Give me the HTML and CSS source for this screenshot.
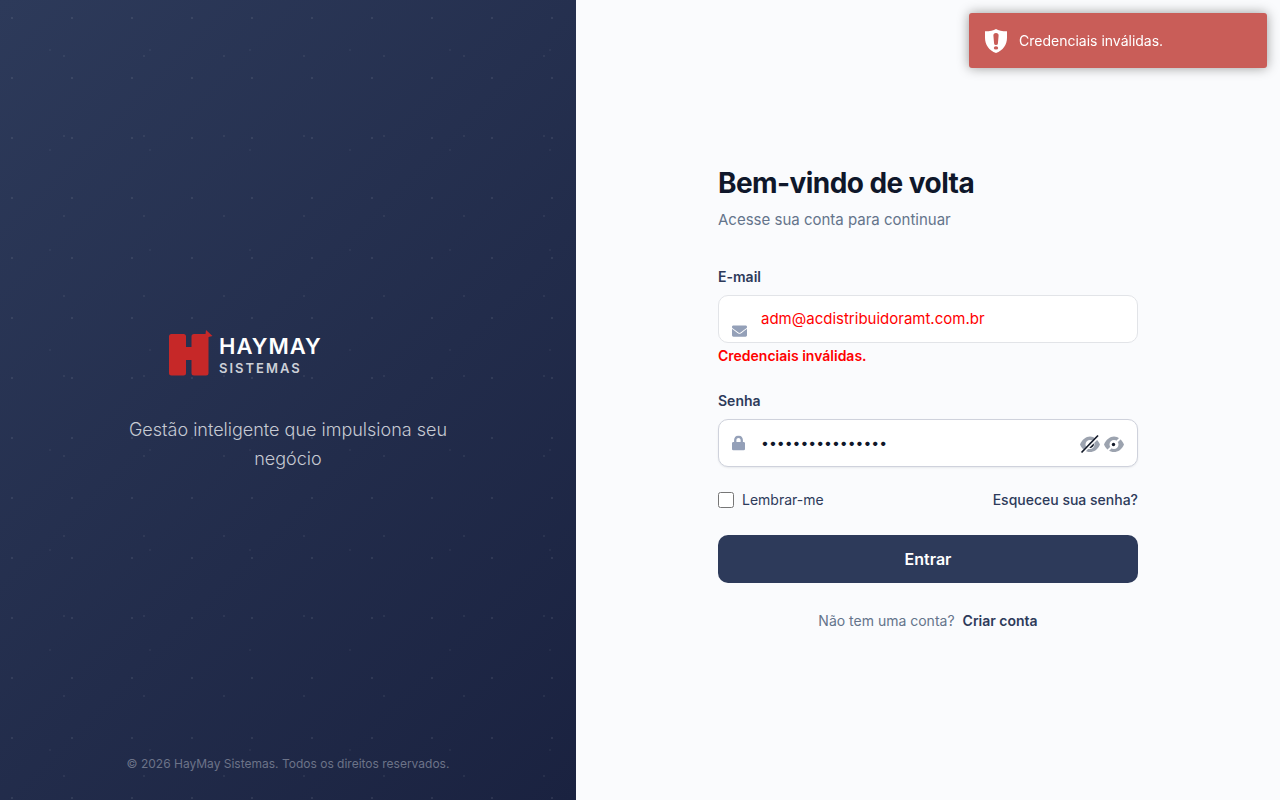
FILE: index.html
```html
<!DOCTYPE html>
<html lang="pt-BR">
<head>
<meta charset="utf-8">
<meta name="viewport" content="width=device-width, initial-scale=1">
<title>HayMay Sistemas</title>
<link rel="stylesheet" href="styles.css">
</head>
<body>
<div class="login">
  <aside class="brand">
    <div class="brand-main">
      <div class="logo">
        <svg class="logo-mark" viewBox="0 0 44 46" aria-hidden="true">
          <path fill="#c62828" d="M3 4H15.500Q18 4 18 6.500V17H23.500V6.500Q23.500 4 26 4H37.500L38 0 44.500 6 40.500 7V43Q40.500 45.500 38 45.500H26Q23.500 45.500 23.500 43V30H18V43Q18 45.500 15.500 45.500H3.500Q1 45.500 1 43V6.500Q1 4 3.500 4Z"/>
        </svg>
        <div class="logo-text"><span class="logo-name">HAYMAY</span><span class="logo-sub">SISTEMAS</span></div>
      </div>
      <p class="tagline">Gestão inteligente que impulsiona seu negócio</p>
    </div>
    <p class="copyright">© 2026 HayMay Sistemas. Todos os direitos reservados.</p>
  </aside>
  <main class="panel">
    <form class="form">
      <h1 class="title">Bem-vindo de volta</h1>
      <p class="subtitle">Acesse sua conta para continuar</p>
      <div class="field">
        <label class="label" for="email">E-mail</label>
        <div class="control">
          <input class="input input-error" id="email" type="email" value="adm@acdistribuidoramt.com.br">
          <svg class="icon" width="15" height="15" viewBox="0 0 512 512" aria-hidden="true"><path fill="currentColor" d="M502.300 190.800c3.900-3.100 9.700-.2 9.700 4.700V400c0 26.500-21.500 48-48 48H48c-26.500 0-48-21.500-48-48V195.600c0-5 5.700-7.800 9.700-4.700 22.400 17.400 52.100 39.500 154.100 113.600 21.100 15.400 56.700 47.800 92.200 47.600 35.700.3 72-32.800 92.300-47.600 102-74.100 131.600-96.300 154-113.700zM256 320c23.200.4 56.600-29.200 73.400-41.400 132.700-96.300 142.800-104.700 173.400-128.700 5.800-4.500 9.200-11.500 9.200-18.900v-19c0-26.500-21.500-48-48-48H48c-26.500 0-48 21.500-48 48v19c0 7.400 3.400 14.300 9.200 18.900 30.600 23.900 40.700 32.400 173.400 128.700 16.800 12.200 50.200 41.800 73.400 41.400z"/></svg>
          <p class="error">Credenciais inválidas.</p>
        </div>
      </div>
      <div class="field">
        <label class="label" for="password">Senha</label>
        <div class="control">
          <input class="input input-password" id="password" type="password" value="abcdefghijklmnop">
          <svg class="icon" width="13" height="15" viewBox="0 0 448 512" aria-hidden="true"><path fill="currentColor" d="M400 224h-24v-72C376 68.200 307.800 0 224 0S72 68.200 72 152v72H48c-26.500 0-48 21.500-48 48v192c0 26.500 21.500 48 48 48h352c26.500 0 48-21.500 48-48V272c0-26.500-21.500-48-48-48zm-104 0H152v-72c0-39.700 32.300-72 72-72s72 32.300 72 72v72z"/></svg>
          <div class="toggles">
            <button class="toggle" type="button" aria-label="Ocultar senha">
              <svg width="20" height="20" viewBox="0 0 20 20"><path fill="#9ca3af" fill-rule="evenodd" d="M0 10.500C2 5.500 6 2.500 10 2.500s8 3 10 8c-2 5-6 7.500-10 7.500S2 15.500 0 10.500ZM10 6a4.500 4.500 0 1 0 0 9 4.500 4.500 0 0 0 0-9Z"/><path fill="#111827" d="M10 8.500h3a3 3 0 1 1-5 4Z"/><path d="M3 18 17 4" stroke="#fff" stroke-width="3"/><path d="M1.500 18.500 18 1.500" stroke="#111827" stroke-width="1.700"/></svg>
            </button>
            <button class="toggle" type="button" aria-label="Mostrar senha">
              <svg width="20" height="20" viewBox="0 0 20 20"><path fill="#9ca3af" fill-rule="evenodd" d="M0 10.500C2 5.500 6 2.500 10 2.500s8 3 10 8c-2 5-6 7.500-10 7.500S2 15.500 0 10.500ZM10 6a4.500 4.500 0 1 0 0 9 4.500 4.500 0 0 0 0-9Z"/><path d="m13 7.500 5-5M7 13.500l-5 5" stroke="#fff" stroke-width="2"/><circle cx="9.500" cy="10.500" r="1.700" fill="#111827"/></svg>
            </button>
          </div>
        </div>
      </div>
      <div class="options">
        <label class="remember"><input class="checkbox" type="checkbox">Lembrar-me</label>
        <a class="link" href="#">Esqueceu sua senha?</a>
      </div>
      <button class="submit" type="submit">Entrar</button>
      <p class="signup">Não tem uma conta?<a class="link link-strong" href="#">Criar conta</a></p>
    </form>
  </main>
</div>
<div class="toast" role="alert">
  <svg width="24" height="24" viewBox="0 0 24 24" aria-hidden="true"><path fill="#fff" fill-rule="evenodd" d="M12 0c2.500 1.800 6 2.200 11 2.300v6.500C23 16 19 21.500 12 24 5 21.500 1 16 1 8.800V2.300C6 2.200 9.500 1.800 12 0ZM12 4Q9.300 4 9.400 6.500l.7 8q.1 1.500 1.900 1.500t1.900-1.500l.7-8Q14.700 4 12 4Zm0 13.200a2.200 1.700 0 1 0 0 3.400 2.200 1.700 0 0 0 0-3.400Z"/></svg>
  <span>Credenciais inválidas.</span>
</div>
</body>
</html>
```
FILE: styles.css
```css
* { box-sizing: border-box; }
body {
  margin: 0;
  font-family: Inter, "Liberation Sans", sans-serif;
  font-size: 14px;
  line-height: 20px;
  color: #2d3a5a;
  background: #fafbfd;
}
h1, p { margin: 0; }
button, input { font-family: inherit; }

.login { display: flex; min-height: 100vh; }

.brand {
  width: 45%;
  display: flex;
  flex-direction: column;
  align-items: center;
  padding: 24px 48px;
  background:
    radial-gradient(circle at 20% 30%, rgba(255, 255, 255, 0.08) 1px, transparent 1px) 0 0 / 60px 60px,
    radial-gradient(circle at 80% 70%, rgba(255, 255, 255, 0.06) 1px, transparent 1px) 0 0 / 80px 80px,
    radial-gradient(circle at 50% 50%, rgba(255, 255, 255, 0.04) 1px, transparent 1px) 0 0 / 100px 100px,
    linear-gradient(135deg, #2d3a5a 0%, #1a2240 100%);
}
.brand-main {
  flex: 1;
  display: flex;
  flex-direction: column;
  justify-content: center;
  gap: 38px;
  width: 320px;
  padding-top: 26px;
}
.logo { display: flex; align-items: center; gap: 7px; padding-left: 40px; }
.logo-mark { width: 44px; height: 46px; overflow: visible; }
.logo-text { display: flex; flex-direction: column; padding-top: 4px; }
.logo-name { font-size: 22px; line-height: 26px; font-weight: 600; letter-spacing: 1px; color: #fff; }
.logo-sub { font-size: 13px; line-height: 18px; font-weight: 600; letter-spacing: 2px; color: #cdd0d8; }
.tagline { font-size: 18px; line-height: 29px; font-weight: 300; text-align: center; color: #c6cad3; }
.copyright { font-size: 12px; line-height: 24px; color: #6c7388; }

.panel {
  flex: 1;
  display: flex;
  align-items: center;
  justify-content: center;
  padding: 32px;
}
.form { width: 100%; max-width: 420px; padding-bottom: 3px; }
.title { font-size: 28px; line-height: 34px; font-weight: 700; letter-spacing: -0.02em; color: #0f172a; }
.subtitle { margin: 8px 0 35px; font-size: 15px; line-height: 24px; color: #64748b; }

.field { margin-bottom: 24px; }
.label { display: block; margin-bottom: 8px; font-weight: 600; }
.control { position: relative; }
.input {
  display: block;
  width: 100%;
  height: 48px;
  padding: 0 16px 2px 42px;
  border: 1px solid #e2e4e8;
  border-radius: 10px;
  font-size: 15px;
  color: #0f172a;
  background: #fff;
  outline: none;
}
.input-error { color: #f00; }
.input-password { padding-right: 64px; border-color: #cfd2dc; font-size: 14px; box-shadow: 0 1px 2px rgba(15, 23, 42, 0.08); }
.icon { position: absolute; left: 14px; top: 50%; transform: translateY(-50%); color: #94a0b8; }
.error { padding: 3px 0 1px; font-weight: 600; color: #f00; }
.toggles { position: absolute; right: 14px; top: 0; height: 100%; display: flex; align-items: center; gap: 4px; padding-top: 2px; }
.toggle { display: flex; padding: 0; border: 0; background: none; cursor: pointer; }

.options { display: flex; justify-content: space-between; align-items: center; margin: -1px 0 25px; }
.remember { display: flex; align-items: center; gap: 8px; }
.checkbox { width: 16px; height: 16px; margin: 0; }
.link { font-weight: 500; color: #2d3a5a; text-decoration: none; }
.link-strong { margin-left: 8px; font-weight: 600; }
.submit {
  width: 100%;
  height: 48px;
  border: 0;
  border-radius: 10px;
  font-size: 16px;
  font-weight: 600;
  color: #fff;
  background: #2d3a5a;
  cursor: pointer;
}
.signup { margin-top: 28px; text-align: center; color: #64748b; }

.toast {
  position: fixed;
  top: 13px;
  right: 13px;
  width: 298px;
  display: flex;
  align-items: center;
  gap: 11px;
  padding: 15px;
  border-radius: 3px;
  font-size: 14px;
  line-height: 25px;
  color: #fff;
  background: #c95d58;
  box-shadow: 0 0 12px #999;
}
```
